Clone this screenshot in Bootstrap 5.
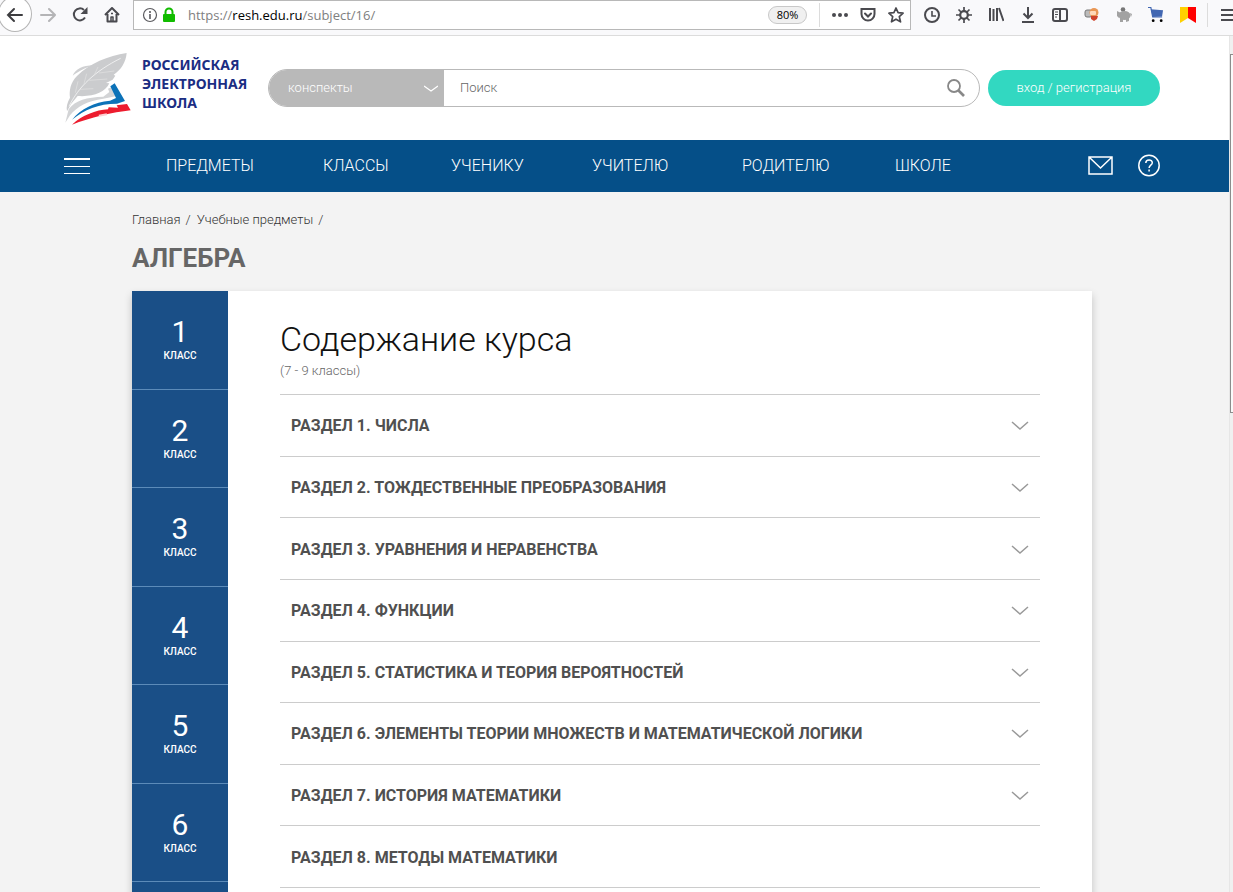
<!DOCTYPE html>
<html lang="ru">
<head>
<meta charset="utf-8">
<meta name="viewport" content="width=device-width, initial-scale=1">
<title>Алгебра — Российская электронная школа</title>
<link href="https://cdn.jsdelivr.net/npm/bootstrap@5.3.0/dist/css/bootstrap.min.css" rel="stylesheet">
<style>
body{font-family:Roboto,"Liberation Sans",sans-serif;background:#f3f3f3;color:#222;font-size:13px;line-height:20px}
svg{display:block;flex-shrink:0}
button,a{color:inherit}
.icon-btn{border:0;background:none;padding:0;display:block}
.ff-bar{height:36px;background:#f9f9fb;border-bottom:1px solid #dcdcdc;color:#4a4a4f}
.ff-back{width:34px;height:36px;margin-left:-2px;margin-top:-4px;border:1px solid #b5b5b5;border-radius:50%;background:#fff;display:flex;align-items:center;justify-content:center}
.ff-nav{width:133px}
.ff-nav .icon-btn{height:30px}
.ff-url{height:30px;border:1px solid #b8b8b8;background:#fff;padding:0 6px 0 8px}
.ff-address{font:13px/20px "Open Sans","Noto Sans",sans-serif;color:#808080;white-space:nowrap}
.ff-address b{color:#000;font-weight:400}
.ff-zoom{font:11px/16px "Open Sans",sans-serif;border:1px solid #c8c8c8;border-radius:9px;background:#f0f0f0;color:#000;width:39px;padding:0;text-align:center}
.ff-line{width:1px;height:24px;background:#dcdcdc}
.ff-url .ff-line{margin:0 8px 0 12px}
.ff-tools{padding-left:13px;height:30px}
.ff-tools .ff-line{margin-left:-5px;margin-right:-3px}
.viewport{height:calc(100vh - 36px)}
.page-scroll{overflow:hidden auto;scrollbar-width:none}
.page-scroll::-webkit-scrollbar{display:none}
.scroll-rail{width:4px;background:#f0f0f0;border-left:1px solid #e6e6e6;padding-top:18px}
.scroll-grip{height:359px;border:1px solid #8c8c8c;border-right:0;background:#fafafa}
.site-top{height:104px;background:#fff}
.wide{max-width:1096px;margin:0 auto}
.shift{padding-right:5px}
.brand{width:204px}
.top-control{margin-top:33px}
.logo-text{font:700 14px/19px "Noto Sans","Open Sans",sans-serif;color:#1b2d83;padding-top:3px}
.search-box{height:38px;border:1px solid #b9b9b9;border-radius:19px;background:#fff;overflow:hidden}
.search-kind{width:175px;background:#b9b9b9}
.search-kind select{appearance:none;border:0;background:none;color:#fff;width:100%;height:36px;padding:8px 19px;line-height:20px;font-weight:300;outline:0}
.search-kind svg{position:absolute;right:6px;top:14px;pointer-events:none}
.search-box input{border:0;outline:0;font-weight:300;padding:0 16px;color:#555}
.search-box input::placeholder{color:#666;opacity:1}
.search-box .icon-btn{padding-right:14px}
.login{width:172px;height:36px;margin-top:1px;border-radius:18px;background:#32d8c1;color:#fff;border:0;font-weight:300}
.main-nav{height:52px;background:#054f88;color:#fff}
.menu-btn{width:102px}
.menu-grid{display:grid;grid-template-columns:157fr 128fr 141fr 150fr 153fr 57fr;width:786px;font-size:16px;font-weight:300}
.menu-grid a{white-space:nowrap;text-decoration:none}
.page{max-width:960px;margin:0 auto}
.crumbs{padding-top:18px;font-weight:300;color:#333}
.crumbs a{text-decoration:none}
.crumbs i{font-style:normal;padding:0 6px 0 5px}
h1{font-size:26px;line-height:32px;font-weight:700;color:#666;margin:12px 0 17px}
.course{background:#fff;box-shadow:0 4px 8px rgba(0,0,0,.2)}
.grades{width:96px;height:887px;display:grid;grid-template-rows:repeat(9,1fr);background:#1a4f87;color:#fff}
.grades a{text-decoration:none;text-align:center;font-size:10px;font-weight:500;line-height:16px;border-bottom:1px solid #5c8bb9;padding-top:24px}
.grades span{display:block;font-size:30px;font-weight:400;line-height:33px}
.course-body{padding:28px 52px 0}
h2{font-size:34px;line-height:40px;font-weight:300;color:#111;margin:0 0 2px}
.course-note{font-weight:300;color:#666;margin:0;padding-bottom:13px}
.sections{height:494px;display:grid;grid-template-rows:repeat(8,1fr);border-top:1px solid #ccc}
.sections button{border:0;border-bottom:1px solid #ccc;background:none;padding:2px 11px 0;font-size:16px;font-weight:700;color:#505050;text-align:left}
</style>
</head>
<body class="overflow-hidden">
<div class="ff-bar d-flex align-items-start">
  <div class="ff-nav d-flex">
    <button class="ff-back p-0" aria-label="Назад"><svg width="18" height="18" viewBox="0 0 18 18" fill="none" stroke="#3d3d40" stroke-width="2" stroke-linecap="round"><path d="M2 10h14M8 4l-6 6 6 6"/></svg></button>
    <button class="icon-btn ms-2" aria-label="Вперёд"><svg width="16" height="16" viewBox="0 0 16 16" fill="none" stroke="#b4b4b6" stroke-width="2" stroke-linecap="round"><path d="M1 8h14M9 2l6 6-6 6"/></svg></button>
    <button class="icon-btn ms-3" aria-label="Обновить"><svg width="16" height="16" viewBox="0 0 16 16" fill="none" stroke="#4a4a4f" stroke-width="2"><path d="M13 10.500A6 6 0 1 1 12 3"/><path d="M15.500 0v7H8.500z" fill="#4a4a4f" stroke="none"/></svg></button>
    <button class="icon-btn ms-3" aria-label="Домой"><svg width="16" height="16" viewBox="0 0 16 16" fill="none" stroke="#4a4a4f" stroke-width="2" stroke-linejoin="round"><path d="M1 8l7-7 7 7M3.500 7v7.500h9V7"/><path d="M7 14v-4h2v4M7 6.500h2" stroke-width="1.500"/></svg></button>
  </div>
  <div class="ff-url d-flex align-items-center flex-grow-1">
    <svg width="16" height="16" viewBox="0 0 16 16" fill="none" stroke="#5a5a5e"><circle cx="8" cy="8" r="6.500" stroke-width="1.200"/><path d="M8 7v5M8 4v2" stroke-width="1.600"/></svg>
    <svg class="ms-1" width="14" height="16" viewBox="0 0 14 16"><path d="M3.500 8V5a3.500 3.500 0 0 1 7 0v3" fill="none" stroke="#12bc00" stroke-width="2"/><rect x="1" y="7" width="12" height="8" rx="1" fill="#12bc00"/></svg>
    <div class="ff-address ms-2 ps-1 flex-grow-1">https://<b>resh.edu.ru</b>/subject/16/</div>
    <button class="ff-zoom">80%</button>
    <div class="ff-line"></div>
    <button class="icon-btn ms-1" aria-label="Действия"><svg width="16" height="16" fill="#4a4a4f"><circle cx="2" cy="8" r="2"/><circle cx="8" cy="8" r="2"/><circle cx="14" cy="8" r="2"/></svg></button>
    <button class="icon-btn ms-2 ps-1" aria-label="Pocket"><svg width="16" height="16" viewBox="0 0 16 16" fill="none" stroke="#4a4a4f" stroke-width="2" stroke-linecap="round"><path d="M1.500 2h13v5a6.500 6.500 0 0 1-13 0z"/><path d="M5 6.500l3 3 3-3"/></svg></button>
    <button class="icon-btn ms-2 ps-1" aria-label="Закладка"><svg width="16" height="16" viewBox="0 0 16 16" fill="none" stroke="#4a4a4f" stroke-width="1.700" stroke-linejoin="round"><path d="M8 1l2.100 4.700 5 .5-3.800 3.400 1.200 5.200L8 12.200l-4.500 2.600 1.200-5.200L.9 6.200l5-.5z"/></svg></button>
  </div>
  <div class="ff-tools d-flex align-items-center gap-3">
    <svg width="16" height="16" viewBox="0 0 16 16" fill="none" stroke="#4a4a4f" stroke-width="2"><circle cx="8" cy="8" r="7"/><path d="M8 4v5h4" stroke-width="1.600"/></svg>
    <svg width="16" height="16" viewBox="0 0 16 16" fill="none" stroke="#4a4a4f"><circle cx="8" cy="8" r="3.800" stroke-width="2.200"/><path d="M8 0v4M8 12v4M0 8h4M12 8h4M2.500 2.500L5 5M11 11l2.500 2.500M2.500 13.500L5 11M11 5l2.500-2.500" stroke-width="1.700"/></svg>
    <svg width="16" height="16" viewBox="0 0 16 16" fill="none" stroke="#4a4a4f" stroke-width="2"><path d="M2 1v13M5.500 2v12M9 1v13M11 1l4.500 13"/></svg>
    <svg width="16" height="16" viewBox="0 0 16 16" fill="none" stroke="#4a4a4f" stroke-width="2"><path d="M8 0v11M3.500 6.500L8 11l4.500-4.500M2 15h12"/></svg>
    <svg width="16" height="16" viewBox="0 0 16 16" fill="none" stroke="#4a4a4f" stroke-width="2"><rect x="1" y="2" width="14" height="12" rx="2"/><path d="M8 2v12"/><path d="M3 5h3M3 7.500h3M3 10h2" stroke-width="1"/></svg>
    <svg width="16" height="16" viewBox="0 0 16 16"><rect x="1" y="3" width="7" height="7" rx="2" fill="#bbb" stroke="#777"/><circle cx="10" cy="5.500" r="4.500" fill="#e99755"/><rect x="6" y="4" width="6" height="4" rx="1" fill="#ffd9b8"/><path d="M7 9h7l-1 3-3 2-3-2z" fill="#cf432b"/></svg>
    <svg width="16" height="16" viewBox="0 0 16 16" fill="#a2a2a2"><circle cx="7" cy="2.500" r="2.300" fill="#777"/><ellipse cx="8.500" cy="8.500" rx="6" ry="4.500"/><path d="M1 4l4 2-2 5-2-2zM4 10h3v5H4zM10 10h3v4l-3 1zM14 6l2 1-1 3z"/></svg>
    <svg width="16" height="16" viewBox="0 0 17 16"><path d="M0 0h3l2 10h10" fill="none" stroke="#4267b2" stroke-width="1.300"/><path d="M3 2l13 1-1 6-10 1z" fill="#4267b2"/><circle cx="5.500" cy="14" r="1.500"/><circle cx="14" cy="14" r="1.500"/></svg>
    <svg width="16" height="16" viewBox="0 0 16 16"><path d="M0 0h8v11l-8 5z" fill="#ffd000"/><path d="M8 0h8v16l-8-5z" fill="#f00"/></svg>
    <div class="ff-line"></div>
    <svg width="12" height="16" viewBox="0 0 12 16" stroke="#4a4a4f" stroke-width="2"><path d="M0 3h12M0 8h12M0 13h12"/></svg>
  </div>
</div>

<div class="viewport d-flex">
  <div class="page-scroll flex-grow-1">
    <header class="site-top shift">
      <div class="wide d-flex align-items-start">
        <a href="#" class="brand d-flex text-decoration-none pt-3">
          <svg width="70" height="75" viewBox="42 33 210 225">
            <path d="M68 104c8-20 30-31 62-31-24 8-40 16-62 31z" fill="#cfd0d2"/>
            <path d="M133 77l14-10 8 3-14 9z" fill="#0c72b8"/>
            <path d="M56 205c20-28 55-36 104-38l18-14-4-10 10-4 16 26-40 8c-46 6-80 24-100 50l-14 22z" fill="#d3d4d6"/>
            <path d="M66 236c28-34 66-52 114-57l18-8-17-35 13-9 31 53-24 8c-56 0-98 18-135 48z" fill="#0c72b8"/>
            <path d="M66 251c30-28 72-44 108-46l2-6 28 1-4-7 31-4 11 19c-54 6-122 22-176 43z" fill="#ed1c2e"/>
            <path d="M146 221l24-4 1 6-24 4z" fill="#fbd0d2"/>
            <path d="M230 36c-55 8-112 32-149 69-20 20-24 45-21 65-8 14-12 28-9 41l12-22 20-24c47 3 82-10 95-38l-10-1 20-10 8-12-5-3c22-14 37-38 39-65z" fill="#cbccce"/>
            <path d="M57 196c28-58 78-106 155-144" fill="none" stroke="#fff" stroke-width="2"/>
            <path d="M76 155l8-34M102 128l8-30M132 103l12-25M90 145l40-2M118 118l54-4M147 96l46-6" stroke="#e2e2e3" stroke-width="2"/>
          </svg>
          <span class="logo-text ms-2">РОССИЙСКАЯ<br>ЭЛЕКТРОННАЯ<br>ШКОЛА</span>
        </a>
        <form class="search-box top-control d-flex flex-grow-1 me-2" onsubmit="return false">
          <label class="search-kind position-relative flex-shrink-0"><span class="visually-hidden">Где</span>
            <select><option>конспекты</option><option>уроки</option></select>
            <svg width="14" height="9" viewBox="0 0 14 9" fill="none" stroke="#fff" stroke-width="1.300"><path d="M0 2l7 5 7-5"/></svg>
          </label>
          <input class="flex-grow-1" type="text" placeholder="Поиск" aria-label="Поиск">
          <button class="icon-btn" aria-label="Найти"><svg width="18" height="18" viewBox="0 0 18 18" fill="none" stroke="#888"><circle cx="7" cy="7" r="6" stroke-width="1.800"/><path d="M11 11l6 6" stroke-width="2.700"/></svg></button>
        </form>
        <div class="top-control"><button class="login">вход / регистрация</button></div>
      </div>
    </header>
    <nav class="main-nav shift">
      <div class="wide h-100 d-flex align-items-center">
        <button class="icon-btn menu-btn" aria-label="Меню"><svg width="26" height="18" viewBox="0 0 26 18" fill="#fff"><path d="M0 1h26v2H0zM0 9h26v1H0zM0 16h26v1H0z"/></svg></button>
        <div class="menu-grid"><a href="#">ПРЕДМЕТЫ</a><a href="#">КЛАССЫ</a><a href="#">УЧЕНИКУ</a><a href="#">УЧИТЕЛЮ</a><a href="#">РОДИТЕЛЮ</a><a href="#">ШКОЛЕ</a></div>
        <a href="#" class="ms-auto me-4" aria-label="Сообщения"><svg width="26" height="20" viewBox="0 0 26 20" fill="none" stroke="#fff" stroke-width="1.500"><path d="M2 1h23v17H2zM2 1l11.500 11L25 1"/></svg></a>
        <a href="#" aria-label="Помощь"><svg width="23" height="24" viewBox="0 0 23 24" fill="none" stroke="#fff" stroke-width="1.500"><circle cx="12" cy="11.500" r="10.200"/><path d="M8.800 9c0-4 6.500-4 6.500-.3 0 2.500-3.200 2.500-3.200 5.300M12.100 15.500v2"/></svg></a>
      </div>
    </nav>
    <main class="shift">
      <div class="page">
        <div class="crumbs"><a href="#">Главная</a><i>/</i><a href="#">Учебные предметы</a><i>/</i></div>
        <h1>АЛГЕБРА</h1>
        <div class="course d-flex align-items-start">
          <div class="grades flex-shrink-0">
            <a href="#"><span>1</span>КЛАСС</a><a href="#"><span>2</span>КЛАСС</a><a href="#"><span>3</span>КЛАСС</a><a href="#"><span>4</span>КЛАСС</a><a href="#"><span>5</span>КЛАСС</a><a href="#"><span>6</span>КЛАСС</a><a href="#"><span>7</span>КЛАСС</a><a href="#"><span>8</span>КЛАСС</a><a href="#"><span>9</span>КЛАСС</a>
          </div>
          <section class="course-body flex-grow-1">
            <h2>Содержание курса</h2>
            <p class="course-note">(7 - 9 классы)</p>
            <div class="sections">
              <button class="d-flex align-items-center justify-content-between">РАЗДЕЛ 1. ЧИСЛА<svg width="18" height="10" fill="none" stroke="#999" stroke-width="1.500"><path d="M1 1l8 7 8-7"/></svg></button>
              <button class="d-flex align-items-center justify-content-between">РАЗДЕЛ 2. ТОЖДЕСТВЕННЫЕ ПРЕОБРАЗОВАНИЯ<svg width="18" height="10" fill="none" stroke="#999" stroke-width="1.500"><path d="M1 1l8 7 8-7"/></svg></button>
              <button class="d-flex align-items-center justify-content-between">РАЗДЕЛ 3. УРАВНЕНИЯ И НЕРАВЕНСТВА<svg width="18" height="10" fill="none" stroke="#999" stroke-width="1.500"><path d="M1 1l8 7 8-7"/></svg></button>
              <button class="d-flex align-items-center justify-content-between">РАЗДЕЛ 4. ФУНКЦИИ<svg width="18" height="10" fill="none" stroke="#999" stroke-width="1.500"><path d="M1 1l8 7 8-7"/></svg></button>
              <button class="d-flex align-items-center justify-content-between">РАЗДЕЛ 5. СТАТИСТИКА И ТЕОРИЯ ВЕРОЯТНОСТЕЙ<svg width="18" height="10" fill="none" stroke="#999" stroke-width="1.500"><path d="M1 1l8 7 8-7"/></svg></button>
              <button class="d-flex align-items-center justify-content-between">РАЗДЕЛ 6. ЭЛЕМЕНТЫ ТЕОРИИ МНОЖЕСТВ И МАТЕМАТИЧЕСКОЙ ЛОГИКИ<svg width="18" height="10" fill="none" stroke="#999" stroke-width="1.500"><path d="M1 1l8 7 8-7"/></svg></button>
              <button class="d-flex align-items-center justify-content-between">РАЗДЕЛ 7. ИСТОРИЯ МАТЕМАТИКИ<svg width="18" height="10" fill="none" stroke="#999" stroke-width="1.500"><path d="M1 1l8 7 8-7"/></svg></button>
              <button class="d-flex align-items-center">РАЗДЕЛ 8. МЕТОДЫ МАТЕМАТИКИ</button>
            </div>
          </section>
        </div>
      </div>
    </main>
  </div>
  <div class="scroll-rail flex-shrink-0"><div class="scroll-grip"></div></div>
</div>
<script src="https://cdn.jsdelivr.net/npm/bootstrap@5.3.0/dist/js/bootstrap.bundle.min.js"></script>
</body>
</html>
